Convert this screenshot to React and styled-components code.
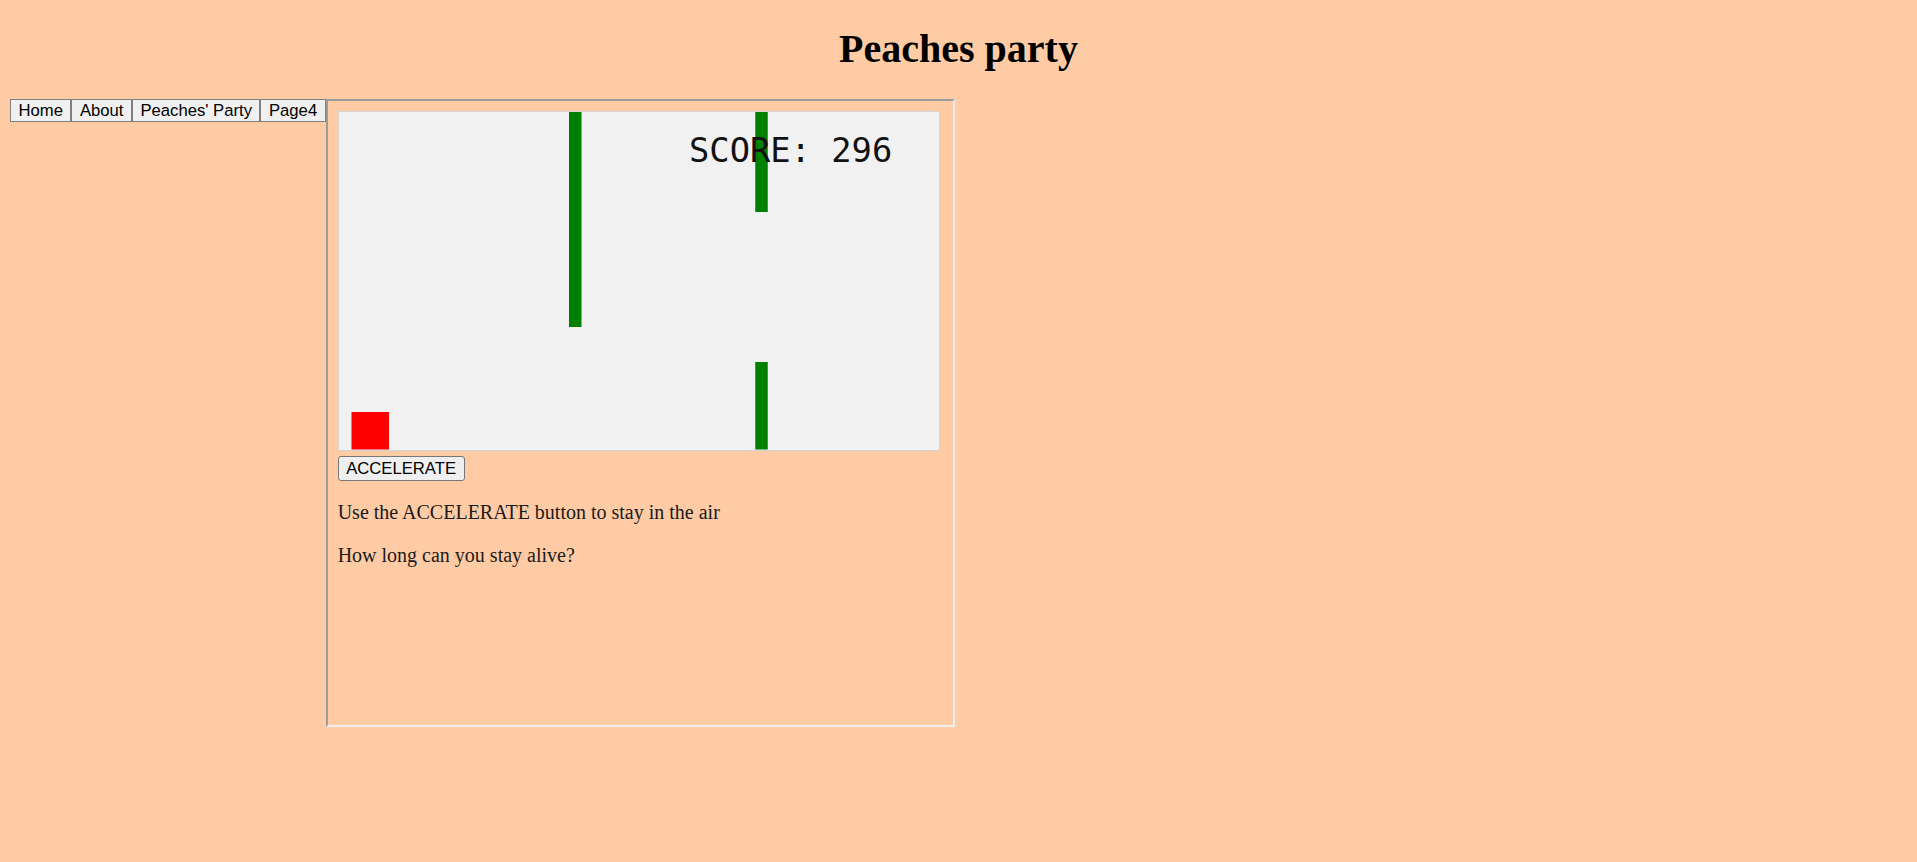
import React from 'react';
import styled, { createGlobalStyle } from 'styled-components';

const GlobalStyle = createGlobalStyle`
  html, body {
    margin: 0;
    padding: 0;
    background: #ffcba4;
  }

  body {
    font-family: "Liberation Serif", "Times New Roman", serif;
    color: #000;
  }
`;

const Page = styled.div`
  padding: 0 10px;
  min-height: 862px;
  box-sizing: border-box;
  overflow: hidden;
`;

const Title = styled.h1`
  margin: 26px 0 27px;
  font-size: 40px;
  line-height: 46px;
  font-weight: bold;
  text-align: center;
`;

const Layout = styled.div`
  display: flex;
  align-items: flex-start;
`;

const Nav = styled.nav`
  display: flex;
`;

const NavButton = styled.button`
  margin: 0;
  padding: 1px 7.5px;
  border: 1px solid #7f7f7f;
  border-radius: 0;
  background: #f0f0f0;
  color: #000;
  font-family: "Liberation Sans", Arial, sans-serif;
  font-size: 16.67px;
  line-height: 19px;
  cursor: pointer;
`;

const Panel = styled.main`
  box-sizing: border-box;
  width: 629px;
  height: 628px;
  padding: 10px;
  border: 2px solid;
  border-color: #9c9c9c #eeeeee #eeeeee #9c9c9c;
`;

const GameBoard = styled.div`
  width: 600px;
  height: 337.5px;
  border: 1px solid #d3d3d3;
  background: #f1f1f1;

  svg {
    display: block;
  }
`;

const ActionButton = styled.button`
  display: block;
  margin: 5px 0 0;
  padding: 1px 7.5px;
  border: 1px solid #767676;
  border-radius: 3px;
  background: #efefef;
  color: #000;
  font-family: "Liberation Sans", Arial, sans-serif;
  font-size: 16.67px;
  line-height: 21.5px;
  cursor: pointer;
`;

const Text = styled.p`
  margin: 20px 0;
  font-size: 20px;
  line-height: 23px;
  color: #1a1a1a;
`;

const obstacles = [
  { x: 184, y: 0, h: 172 },
  { x: 333, y: 0, h: 80 },
  { x: 333, y: 200, h: 70 },
];

const navItems = ['Home', 'About', "Peaches' Party", 'Page4'];

const Game = ({ score }) => (
  <GameBoard>
    <svg width="600" height="337.5" viewBox="0 0 480 270">
      {obstacles.map((o, i) => (
        <rect key={i} x={o.x} y={o.y} width="10" height={o.h} fill="#008000" />
      ))}
      <text
        x="280"
        y="40"
        fill="#111"
        fontFamily="'DejaVu Sans Mono', monospace"
        fontSize="27"
      >
        SCORE: {score}
      </text>
      <rect x="10" y="240" width="30" height="30" fill="#ff0000" />
    </svg>
  </GameBoard>
);

const App = () => {
  return (
    <Page>
      <GlobalStyle />
      <Title>Peaches party</Title>
      <Layout>
        <Nav>
          {navItems.map(item => (
            <NavButton key={item}>{item}</NavButton>
          ))}
        </Nav>
        <Panel>
          <Game score={296} />
          <ActionButton>ACCELERATE</ActionButton>
          <Text>Use the ACCELERATE button to stay in the air</Text>
          <Text>How long can you stay alive?</Text>
        </Panel>
      </Layout>
    </Page>
  );
};

export default App;
